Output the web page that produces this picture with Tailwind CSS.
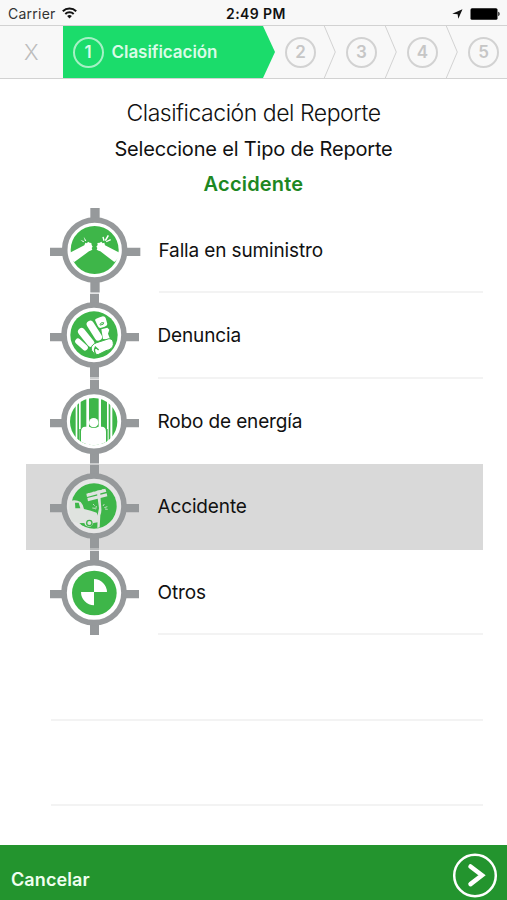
<!DOCTYPE html>
<html lang="es">
<head>
    <meta charset="UTF-8">
    <meta name="viewport" content="width=device-width, initial-scale=1.0">
    <title>Clasificación del Reporte</title>
    <script src="https://cdn.jsdelivr.net/npm/@tailwindcss/browser@4"></script>
</head>
<body class="bg-white font-['Inter','Liberation_Sans',sans-serif] text-[#111]">
    <div class="flex flex-col w-[507px] h-[900px] overflow-hidden">
        <!-- Barra de estado -->
        <header class="grid grid-cols-3 items-center h-[25px] shrink-0 bg-[#f8f8f8] px-2 pt-[3px] text-[14px] leading-none">
            <div class="flex items-center gap-[6px]">
                <span class="text-[#333] tracking-[0.25px]">Carrier</span>
                <svg class="w-[15px] h-[12px] -mt-[2px]" viewBox="0 0 15 12" fill="none" stroke="#111" stroke-width="2">
                    <path d="M.8 4.3a9.6 9.6 0 0 1 13.4 0M3.3 7a6 6 0 0 1 8.4 0"/>
                    <path d="M7.5 11.5 5.1 9.1a3.4 3.4 0 0 1 4.8 0z" fill="#111" stroke="none"/>
                </svg>
            </div>
            <div class="text-center font-semibold whitespace-nowrap pl-[5px] tracking-[0.4px]">2:49 PM</div>
            <div class="flex items-center justify-end gap-[7px] -mr-[1px]">
                <svg class="w-[11px] h-[10px] -mt-px" viewBox="0 0 11 10"><path d="M10.5.3 6.3 9.8 5.6 5.3.2 4.7z" fill="#111"/></svg>
                <svg class="w-[30px] h-[12px] -mt-px" viewBox="0 0 30 12"><rect x=".5" y=".2" width="27" height="11.6" rx="1.5"/><path d="M28.3 3.8c1.7.6 1.7 3.8 0 4.4z"/></svg>
            </div>
        </header>

        <!-- Pasos -->
        <nav class="flex h-[54px] shrink-0 bg-[#f8f8f8] border-y border-[#d2d2d2] text-[#c6c6c6] font-semibold text-[17px]">
            <div class="w-[62.5px] flex items-center justify-center font-light text-[22px] text-[#bdbdbd]">X</div>
            <div class="w-[212.5px] flex items-center gap-2 pl-[10px] bg-[#1bdc6b] text-[#d9fbe7] [clip-path:polygon(0_0,200.5px_0,100%_50%,200.5px_100%,0_100%)]">
                <span class="size-[31px] rounded-full border-2 border-[#a5f1c5] flex items-center justify-center pt-px">1</span>
                <span class="tracking-[-0.05px] pt-[2px]">Clasificación</span>
            </div>
            <div class="w-[61px] shrink-0 flex items-center pl-[10px]">
                <span class="size-[31px] shrink-0 rounded-full border-2 border-[#d2d2d2] flex items-center justify-center pt-px">2</span>
                <svg class="w-[12px] h-[52px] ml-[8px] shrink-0" viewBox="0 0 12 52" fill="none" stroke="#d2d2d2"><path d="M.3 0 11.3 26 .3 52"/></svg>
            </div>
            <div class="w-[61px] shrink-0 flex items-center pl-[10px]">
                <span class="size-[31px] shrink-0 rounded-full border-2 border-[#d2d2d2] flex items-center justify-center pt-px">3</span>
                <svg class="w-[12px] h-[52px] ml-[8px] shrink-0" viewBox="0 0 12 52" fill="none" stroke="#d2d2d2"><path d="M.3 0 11.3 26 .3 52"/></svg>
            </div>
            <div class="w-[61px] shrink-0 flex items-center pl-[10px]">
                <span class="size-[31px] shrink-0 rounded-full border-2 border-[#d2d2d2] flex items-center justify-center pt-px">4</span>
                <svg class="w-[12px] h-[52px] ml-[8px] shrink-0" viewBox="0 0 12 52" fill="none" stroke="#d2d2d2"><path d="M.3 0 11.3 26 .3 52"/></svg>
            </div>
            <div class="shrink-0 flex items-center pl-[10px]">
                <span class="size-[31px] shrink-0 rounded-full border-2 border-[#d2d2d2] flex items-center justify-center pt-px">5</span>
            </div>
        </nav>

        <main class="flex-1 flex flex-col">
            <!-- Títulos -->
            <div class="h-[128.5px] shrink-0 pt-[16px] text-center whitespace-nowrap">
                <h1 class="text-[23px] leading-[36px] font-light tracking-[-0.46px]">Clasificación del Reporte</h1>
                <p class="text-[20px] leading-[37px] tracking-[-0.18px]">Seleccione el Tipo de Reporte</p>
                <p class="text-[20px] leading-[32px] font-semibold tracking-[0.2px] text-[#1d8722]">Accidente</p>
            </div>

            <!-- Lista de tipos -->
            <ul class="pl-[25.5px] pr-[24.5px] text-[19px] tracking-[-0.14px]">
                <li class="flex h-[85.5px] pl-[24.5px]">
                    <svg class="w-[91px] h-[85.5px] shrink-0" viewBox="0 0 273 256.5">
                        <path d="M0 119h60v25H0zM210 119h61v25h-61zM121 0h28v40h-28zM121 215h28v38h-28zM121 254.500h28v2h-28z" fill="#96999b"/>
                        <circle cx="134" cy="126" r="90" fill="#fff" stroke="#96999b" stroke-width="17"/>
                        <circle cx="134" cy="126" r="72" fill="#3eb649"/>
                        <g transform="translate(-30 -22)" fill="#fff">
                            <path d="M88 157 133 134l3-8 5 2 3-5 5 3 5 1 1 6 3 5-3 4 2 5-6 3-4 2-44 32c-9-8-14-15-16-27z"/>
                            <path d="M240 157 195 134l-2-8-5 2-4-5-5 3-7 1 1 6-4 5 3 4-2 5 6 3 5 2 42 32c10-8 15-15 17-27z"/>
                            <path d="M121 117l11 5-2 3zM131 108l8 12-4 1zM187 109l4-1 3 11-4 2zM203 103l4 2-9 16-4-2zM211 115l2 4-14 6-1-3z"/>
                        </g>
                    </svg>
                    <div class="flex-1 ml-[17.500px] pt-[3px] flex items-center border-b-2 border-[#f3f3f3]">Falla en suministro</div>
                </li>
                <li class="flex h-[85.5px] pl-[24.5px]">
                    <svg class="w-[90px] h-[85.5px] shrink-0" viewBox="0 0 270 256.5">
                        <path d="M0 120h60v25H0zM207 120h60v25h-60zM120 2h27v40h-27zM120 215h27v38h-27zM120 254.500h27v2h-27z" fill="#96999b"/>
                        <circle cx="132" cy="126" r="90" fill="#fff" stroke="#96999b" stroke-width="17"/>
                        <circle cx="132" cy="126" r="71" fill="#3eb649"/>
                        <g transform="translate(-30 -14)" fill="none" stroke="#fff" stroke-linecap="round">
                            <path d="M114 159 135 178" stroke-width="17"/>
                            <path d="M125 130 152 164" stroke-width="22"/>
                            <path d="M151 108 175 146" stroke-width="28" stroke="#3eb649"/>
                            <path d="M151 108 175 146" stroke-width="22"/>
                            <path d="M165 95q2-5 24-11 6 0 8 5l5 18q0 5-8 8l-13 4q-5 0-8-7z" fill="#fff" stroke="none"/>
                            <path d="M184 123 202 118l6 6-4 12 7 18-22-2z" fill="#fff" stroke="none"/>
                            <path d="M153 180q2-12 17-17l37-12q14 0 13 18-2 14-22 18l-22 11q-9 5-15-4-7-6-8-14z" fill="#fff" stroke="#3eb649" stroke-width="3"/>
                            <path d="M180 108q2-7 11-5 2 6-9 7z" stroke="#3eb649" stroke-width="3"/>
                            <path d="M166 176q-6 12 2 22M166 176l9 8" stroke="#3eb649" stroke-width="4"/>
                        </g>
                    </svg>
                    <div class="flex-1 ml-[17.500px] pt-[3px] flex items-center border-b-2 border-[#f3f3f3]">Denuncia</div>
                </li>
                <li class="flex h-[85.5px] pl-[24.5px]">
                    <svg class="w-[90px] h-[85.5px] shrink-0" viewBox="0 0 270 256.5">
                        <defs><clipPath id="rejas"><circle cx="131" cy="128" r="71"/></clipPath></defs>
                        <path d="M0 120h60v25H0zM207 120h60v25h-60zM120 2h27v40h-27zM120 215h27v38h-27zM120 254.500h27v2h-27z" fill="#96999b"/>
                        <circle cx="132" cy="127" r="90" fill="#fff" stroke="#96999b" stroke-width="17"/>
                        <g clip-path="url(#rejas)">
                            <path d="M60 50h17v150H60zM82 50h5v150h-5zM92 50h17v150H92zM117 50h29v150h-29zM153 50h18v150h-18zM176 50h5v150h-5zM187 50h18v150h-18z" fill="#3eb649"/>
                            <path d="M93 220v-62q0-15 13-15h12q13 8 27 0h10q13 0 13 15v62z" fill="#fff"/>
                            <path d="M88 150h5v44h-5zM168 150h5v44h-5z" fill="#3eb649"/>
                            <circle cx="131" cy="131" r="14" fill="#fff"/>
                        </g>
                    </svg>
                    <div class="flex-1 ml-[17.500px] pt-px flex items-center">Robo de energía</div>
                </li>
                <li class="flex h-[85.5px] pl-[24.5px] bg-[#d9d9d9]">
                    <svg class="w-[90px] h-[85.5px] shrink-0" viewBox="0 0 270 256.5">
                        <path d="M0 120h60v25H0zM207 120h60v25h-60zM120 2h27v40h-27zM120 215h27v38h-27zM120 254.500h27v2h-27z" fill="#96999b"/>
                        <circle cx="132" cy="126" r="90" fill="#e7e7e7" stroke="#96999b" stroke-width="17"/>
                        <circle cx="132" cy="126" r="68" fill="#3eb649"/>
                        <g transform="translate(-90 -23)" fill="#dfe3df">
                            <path d="M150 134q18-5 32 3 7 7 10 21 22 5 38 11 7 11 4 29l-14 2q-3 12-14 11-10 0-13-10h-15l-24-6q-10-27-4-61z"/>
                            <path d="M165 139h11l5 17h-15z" fill="#3eb649"/>
                            <circle cx="208" cy="200" r="8" fill="none" stroke="#3eb649" stroke-width="4"/>
                            <path d="M180 201h13v8l-7-2z" fill="#3eb649"/>
                            <path d="M230 103l10-1 4 55q1 10-3 20l-2 36-7 2 1-39 4-20z"/>
                            <path d="M199 112l57-15 3 9-58 16zM202 125l58-14 2 9-58 15z"/>
                            <path d="M206 110v9M220 106v9M249 98v9" stroke="#dfe3df" stroke-width="4"/>
                            <path d="M219 143l5 5M229 149l-2 10M217 155l8 1M253 143l-4 6M262 151l-9 3M263 159l-8-1" stroke="#dfe3df" stroke-width="2.500"/>
                        </g>
                    </svg>
                    <div class="flex-1 ml-[17.500px] pt-px flex items-center">Accidente</div>
                </li>
                <li class="flex h-[85.5px] pl-[24.5px]">
                    <svg class="w-[90px] h-[85.5px] shrink-0" viewBox="0 0 270 256.5">
                        <path d="M0 120h60v25H0zM207 120h60v25h-60zM120 2h27v40h-27zM120 215h27v41h-27z" fill="#96999b"/>
                        <circle cx="132" cy="128" r="90" fill="#fff" stroke="#96999b" stroke-width="17"/>
                        <circle cx="133" cy="129" r="67" fill="#3eb649"/>
                        <path d="M132 126V87a40 40 0 0 1 39 39zM132 126v40a40 40 0 0 1-39-40z" fill="#fff"/>
                    </svg>
                    <div class="flex-1 ml-[17.500px] pt-[3px] flex items-center border-b-2 border-[#f3f3f3]">Otros</div>
                </li>
                <li class="h-[85.5px] ml-[25px] border-b-2 border-[#f3f3f3]"></li>
                <li class="h-[85.5px] ml-[25px] border-b-2 border-[#f3f3f3]"></li>
            </ul>
        </main>

        <!-- Pie -->
        <footer class="flex items-center justify-between h-[55px] shrink-0 bg-[#23942e] pl-[11px] pr-[9px]">
            <button class="text-[18px] font-semibold tracking-[0.1px] text-[#f0fff0] pt-[13px]">Cancelar</button>
            <button class="pt-[6px]">
                <svg class="size-[46px]" viewBox="0 0 46 46" fill="none" stroke="#fff">
                    <circle cx="23" cy="22.500" r="20.800" stroke-width="2.500"/>
                    <path d="M18.500 13.500 30 22.300 18.500 31.100" stroke-width="4.500" stroke-linecap="round"/>
                </svg>
            </button>
        </footer>
    </div>
</body>
</html>
